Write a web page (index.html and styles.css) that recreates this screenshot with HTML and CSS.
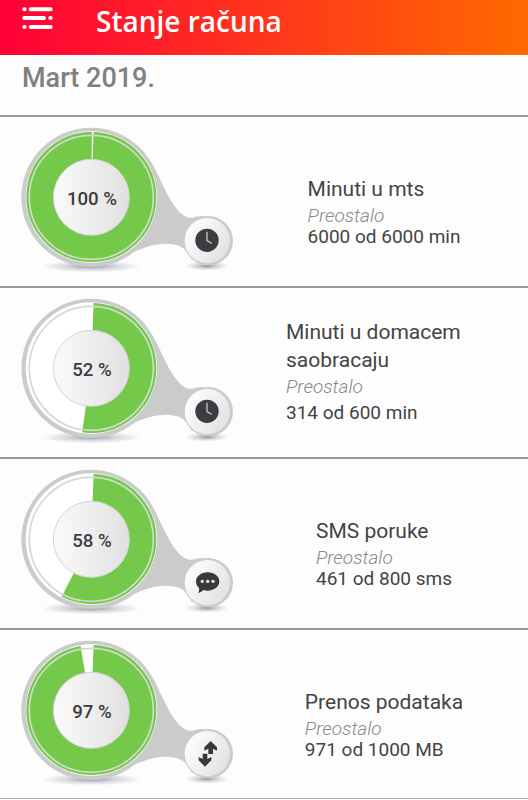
FILE: index.html
```html
<!DOCTYPE html>
<html lang="sr-Latn">
<head>
    <meta charset="UTF-8">
    <meta name="viewport" content="width=device-width, initial-scale=1.0">
    <title>Stanje računa</title>
    <link rel="stylesheet" href="styles.css">
</head>
<body>
    <svg class="sprite" width="0" height="0" aria-hidden="true">
        <defs>
            <linearGradient id="knob" x1="0" x2="1" y1="0" y2="0">
                <stop offset="0" stop-color="#fafafa"/>
                <stop offset="0.5" stop-color="#eeeeee"/>
                <stop offset="1" stop-color="#e0e0e0"/>
            </linearGradient>
            <linearGradient id="knob-small" x1="0" x2="1" y1="0.2" y2="0.8">
                <stop offset="0" stop-color="#ffffff"/>
                <stop offset="1" stop-color="#e0e0e0"/>
            </linearGradient>
            <radialGradient id="shadow">
                <stop offset="0" stop-color="#8d93a0"/>
                <stop offset="0.5" stop-color="#9ba0ac" stop-opacity="0.4"/>
                <stop offset="1" stop-color="#9ba0ac" stop-opacity="0"/>
            </radialGradient>

            <!-- body of the gauge, under the coloured ring -->
            <g id="gauge-base">
                <ellipse cx="244" cy="454" rx="150" ry="18" fill="url(#shadow)"/>
                <ellipse cx="590" cy="453" rx="66" ry="14" fill="url(#shadow)"/>
                <path fill="#cbcbcb" d="M400 112 C440 155 452 208 486 262 C504 290 524 312 548 308 C560 305 570 302 582 304 L600 380 L546 436 C530 400 510 386 466 386 C420 387 380 404 310 442 L244 246 Z"/>
                <circle cx="243" cy="247" r="209" fill="#cbcbcb"/>
                <circle cx="595" cy="377" r="74" fill="#cbcbcb"/>
                <circle cx="244" cy="246" r="197" fill="#ffffff"/>
            </g>

            <!-- inner ring line and knobs, over the coloured ring -->
            <g id="gauge-top">
                <circle cx="244" cy="247" r="186" fill="none" stroke="#d3d9d0" stroke-width="5"/>
                <circle cx="244" cy="247" r="114" fill="url(#knob)" stroke="#d3d3d3" stroke-width="3"/>
                <circle cx="592" cy="377" r="68" fill="url(#knob-small)"/>
            </g>

            <g id="icon-clock">
                <circle cx="591" cy="376" r="35" fill="#3b3d42"/>
                <path d="M591 350 V377 L605 385" fill="none" stroke="#c4c4c4" stroke-width="4"/>
            </g>

            <g id="icon-message">
                <path fill="#38393b" d="M593 346 C613 346 628 358 628 373 C628 389 613 401 593 401 C588 401 584 400 580 399 C576 404 570 407 564 408 C567 404 568 399 567 393 C561 388 558 381 558 373 C558 358 573 346 593 346 Z"/>
                <g fill="#f0f0f0">
                    <circle cx="577" cy="373" r="5"/>
                    <circle cx="593" cy="373" r="5"/>
                    <circle cx="609" cy="373" r="5"/>
                </g>
            </g>

            <g id="icon-transfer" fill="#38393b">
                <path d="M602 339 L621 358 V368 L609 362 V378 H595 V362 L583 368 V358 Z"/>
                <path d="M585 416 L566 397 V387 L578 393 V377 H592 V393 L604 387 V397 Z"/>
            </g>
        </defs>
    </svg>

    <div class="app">
        <header>
            <button class="menu" type="button" aria-label="Meni">
                <svg viewBox="0 0 93 69" width="31" height="23">
                    <g fill="none" stroke="#ffffff" stroke-width="12" stroke-linecap="round">
                        <path d="M7 7 H8 M26 7 H86"/>
                        <path d="M7 33 H66 M85 33 H86"/>
                        <path d="M7 60 H8 M26 60 H86"/>
                    </g>
                </svg>
            </button>
            <h1>Stanje računa</h1>
        </header>

        <main>
            <p class="month">Mart 2019.</p>

            <section class="row">
                <svg class="gauge" viewBox="0 6 720 504">
                    <use href="#gauge-base"/>
                    <circle class="ring" cx="244" cy="246" r="154" pathLength="360" stroke-dasharray="358 2" transform="rotate(-88 244 246)"/>
                    <use href="#gauge-top"/>
                    <text class="percent" x="246" y="270">100 %</text>
                    <use href="#icon-clock"/>
                </svg>
                <div class="info">
                    <div class="info-text">
                        <h2>Minuti u mts</h2>
                        <p class="label">Preostalo</p>
                        <p class="amount">6000 od 6000 min</p>
                    </div>
                </div>
            </section>

            <section class="row">
                <svg class="gauge" viewBox="0 6 720 504">
                    <use href="#gauge-base"/>
                    <circle class="ring" cx="244" cy="246" r="154" pathLength="360" stroke-dasharray="186 174" transform="rotate(-88 244 246)"/>
                    <use href="#gauge-top"/>
                    <text class="percent" x="246" y="270">52 %</text>
                    <use href="#icon-clock"/>
                </svg>
                <div class="info">
                    <div class="info-text info-tall">
                        <h2>Minuti u domacem saobracaju</h2>
                        <p class="label">Preostalo</p>
                        <p class="amount">314 od 600 min</p>
                    </div>
                </div>
            </section>

            <section class="row">
                <svg class="gauge" viewBox="0 6 720 504">
                    <use href="#gauge-base"/>
                    <circle class="ring" cx="244" cy="246" r="154" pathLength="360" stroke-dasharray="205 155" transform="rotate(-88 244 246)"/>
                    <use href="#gauge-top"/>
                    <text class="percent" x="246" y="270">58 %</text>
                    <use href="#icon-message"/>
                </svg>
                <div class="info">
                    <div class="info-text">
                        <h2>SMS poruke</h2>
                        <p class="label">Preostalo</p>
                        <p class="amount">461 od 800 sms</p>
                    </div>
                </div>
            </section>

            <section class="row">
                <svg class="gauge" viewBox="0 6 720 504">
                    <use href="#gauge-base"/>
                    <circle class="ring" cx="244" cy="246" r="154" pathLength="360" stroke-dasharray="348 12" transform="rotate(-88 244 246)"/>
                    <use href="#gauge-top"/>
                    <text class="percent" x="246" y="270">97 %</text>
                    <use href="#icon-transfer"/>
                </svg>
                <div class="info">
                    <div class="info-text">
                        <h2>Prenos podataka</h2>
                        <p class="label">Preostalo</p>
                        <p class="amount">971 od 1000 MB</p>
                    </div>
                </div>
            </section>
        </main>
    </div>
</body>
</html>
```

FILE: styles.css
```css
* {
    margin: 0;
    padding: 0;
    box-sizing: border-box;
}

body {
    background-color: #fdfdfd;
    color: #444444;
    font-family: Roboto, "Liberation Sans", sans-serif;
}

.sprite {
    display: block;
}

header {
    display: flex;
    align-items: flex-start;
    gap: 43px;
    height: 55px;
    padding: 7px 22px 0;
    background: linear-gradient(to right, #ff0038, #ff6a00);
    color: #ffffff;
}

.menu {
    display: flex;
    border: none;
    background: none;
    cursor: pointer;
}

h1 {
    font-family: "Open Sans", "Noto Sans", sans-serif;
    font-size: 28px;
    font-weight: 600;
    line-height: 28px;
}

.month {
    height: 60px;
    padding: 7px 22px 0;
    color: #808080;
    font-size: 27px;
    font-weight: 500;
    line-height: 32px;
}

.row {
    display: flex;
    min-height: 171px;
    padding-left: 10px;
    border-top: 2px solid #9a9a9a;
}

.row:last-child {
    border-bottom: 1px solid #b0b0b0;
}

.gauge {
    flex: none;
    width: 240px;
    height: 168px;
}

.ring {
    fill: none;
    stroke: #74c84a;
    stroke-width: 82;
}

.percent {
    fill: #3c3c40;
    font-size: 56px;
    font-weight: 500;
    text-anchor: middle;
}

.info {
    display: flex;
    flex: 1;
    justify-content: center;
    padding: 30px 10px 0 0;
}

.info-text {
    max-width: 196px;
}

/* the name is one or two lines, its last line always sits on the label */
h2 {
    display: flex;
    align-items: flex-end;
    min-height: 56px;
    font-size: 21px;
    font-weight: 400;
    line-height: 28px;
}

.label {
    color: #888888;
    font-size: 19px;
    font-style: italic;
    font-weight: 300;
    line-height: 26px;
}

.amount {
    font-size: 19px;
    line-height: 16px;
}

.info-tall .amount {
    line-height: 26px;
}
```
